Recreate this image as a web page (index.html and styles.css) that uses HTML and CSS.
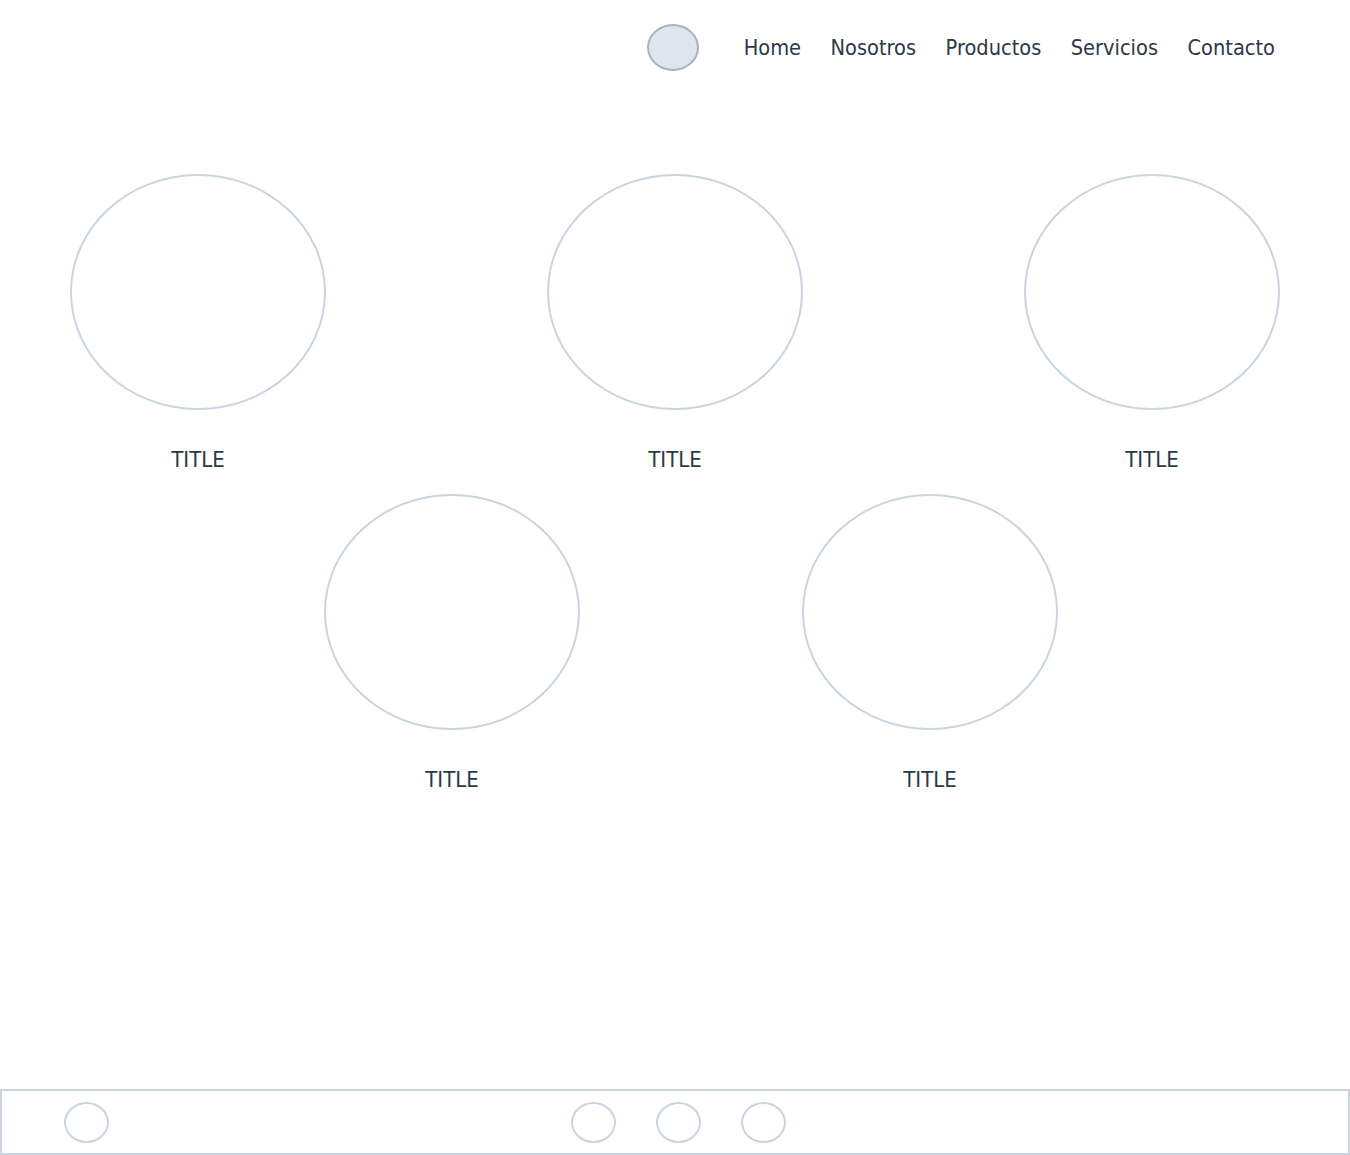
FILE: index.html
```html
<!DOCTYPE html>
<html lang="es">
<head>
<meta charset="utf-8">
<title>Sitio</title>
<link rel="stylesheet" href="styles.css">
</head>
<body>
<div class="page">
  <header class="header">
    <div class="logo"></div>
    <nav class="nav">
      <a href="#">Home</a>
      <a href="#">Nosotros</a>
      <a href="#">Productos</a>
      <a href="#">Servicios</a>
      <a href="#">Contacto</a>
    </nav>
  </header>
  <main class="main">
    <div class="row row-top">
      <div class="card"><div class="circle"></div><div class="title">TITLE</div></div>
      <div class="card"><div class="circle"></div><div class="title">TITLE</div></div>
      <div class="card"><div class="circle"></div><div class="title">TITLE</div></div>
    </div>
    <div class="row row-bottom">
      <div class="card"><div class="circle"></div><div class="title">TITLE</div></div>
      <div class="card"><div class="circle"></div><div class="title">TITLE</div></div>
    </div>
  </main>
  <footer class="footer">
    <div class="ficon"></div>
    <div class="social">
      <div class="ficon"></div>
      <div class="ficon"></div>
      <div class="ficon"></div>
    </div>
  </footer>
</div>
</body>
</html>
```
FILE: styles.css
```css
* { box-sizing: border-box; }
html, body { margin: 0; padding: 0; background: #fff; }
body {
  font-family: "DejaVu Sans", "Liberation Sans", sans-serif;
  font-stretch: condensed;
  color: #2b3846;
}
.page {
  min-height: 100vh;
  display: flex;
  flex-direction: column;
}
.header {
  display: flex;
  align-items: center;
  justify-content: flex-end;
  height: 95px;
  padding-right: 75px;
}
.logo {
  width: 52px;
  height: 47px;
  border-radius: 50%;
  background: #dfe5ec;
  border: 2px solid #a5b4c2;
  margin-right: 45px;
}
.nav {
  display: flex;
  gap: 29.5px;
}
.nav a {
  color: #2b3846;
  text-decoration: none;
  font-size: 21.6px;
}
.main {
  padding-top: 79px;
}
.row {
  display: flex;
}
.row-top {
  justify-content: space-between;
  padding: 0 70px;
}
.row-bottom {
  padding-left: 324px;
  gap: 222px;
  margin-top: 22px;
}
.card {
  width: 256px;
  display: flex;
  flex-direction: column;
  align-items: center;
}
.circle {
  width: 256px;
  height: 236px;
  border-radius: 50%;
  border: 2px solid #c9d4de;
}
.title {
  margin-top: 38px;
  font-size: 22px;
  line-height: 24px;
}
.footer {
  margin-top: auto;
  height: 66px;
  border: 2px solid #c9d4de;
  display: flex;
  align-items: center;
  padding-left: 62px;
}
.social {
  display: flex;
  gap: 40px;
  margin-left: 462px;
}
.ficon {
  width: 45px;
  height: 41px;
  border-radius: 50%;
  border: 2px solid #c9d4de;
}
```
